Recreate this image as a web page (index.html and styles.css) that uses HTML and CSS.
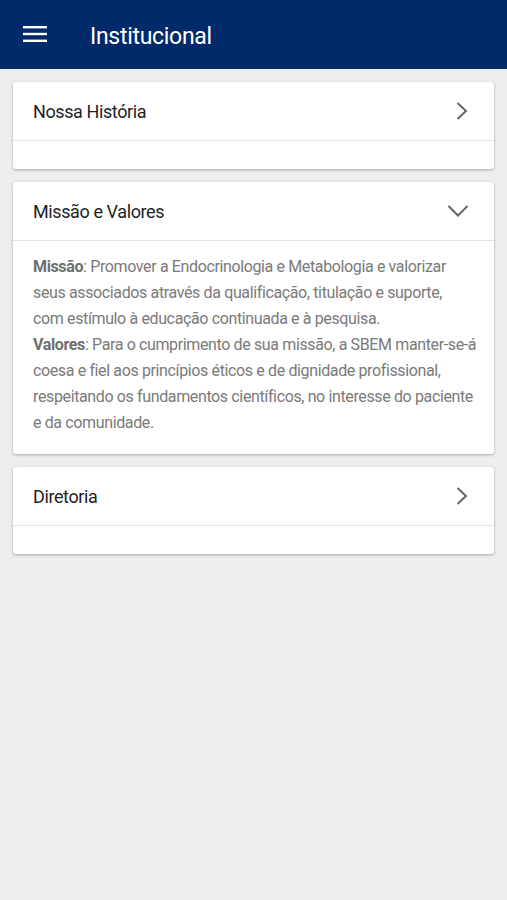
FILE: index.html
```html
<!DOCTYPE html>
<html lang="pt-BR">
  <head>
    <meta charset="UTF-8" />
    <meta name="viewport" content="width=device-width, initial-scale=1.0" />
    <title>Institucional</title>
    <link rel="stylesheet" href="styles.css">
  </head>
  <body>
    <header class="toolbar">
      <button class="menu-btn" aria-label="Menu">
        <svg width="24" height="18" viewBox="0 0 24 18">
          <rect x="0" y="1" width="24" height="2.4" fill="#fff" />
          <rect x="0" y="7.8" width="24" height="2.4" fill="#fff" />
          <rect x="0" y="14.6" width="24" height="2.4" fill="#fff" />
        </svg>
      </button>
      <h1>Institucional</h1>
    </header>

    <main class="content">
      <section class="card">
        <div class="card-head">
          <span>Nossa História</span>
          <svg class="chevron" width="14" height="20" viewBox="0 0 14 20">
            <path d="M2.5 2 L11 10 L2.5 18" fill="none" stroke="#666" stroke-width="2" />
          </svg>
        </div>
        <div class="card-empty"></div>
      </section>

      <section class="card">
        <div class="card-head">
          <span>Missão e Valores</span>
          <svg class="chevron" width="22" height="14" viewBox="0 0 22 14">
            <path d="M1.5 2 L11 11.5 L20.5 2" fill="none" stroke="#666" stroke-width="2" />
          </svg>
        </div>
        <div class="card-body">
          <p><strong>Missão</strong>: Promover a Endocrinologia e Metabologia e valorizar seus associados através da qualificação, titulação e suporte, <span class="nowrap">com estímulo</span> à educação continuada e à pesquisa.</p>
          <p><strong>Valores</strong>: Para o cumprimento de sua missão, a SBEM <span class="nowrap">manter-se-á</span> coesa e fiel aos princípios éticos e de dignidade profissional, respeitando os fundamentos científicos, no interesse do paciente e da comunidade.</p>
        </div>
      </section>

      <section class="card">
        <div class="card-head">
          <span>Diretoria</span>
          <svg class="chevron" width="14" height="20" viewBox="0 0 14 20">
            <path d="M2.5 2 L11 10 L2.5 18" fill="none" stroke="#666" stroke-width="2" />
          </svg>
        </div>
        <div class="card-empty"></div>
      </section>
    </main>
  </body>
</html>
```

FILE: styles.css
```css
body {
  font-family: Roboto, "Liberation Sans", sans-serif;
  background-color: #eceef0;
  margin: 0;
  padding: 0;
  min-height: 900px;
}

.toolbar {
  height: 69px;
  background-color: #012a6b;
  display: flex;
  align-items: center;
  padding: 0 0 0 23px;
  box-sizing: border-box;
}

.menu-btn {
  background: none;
  border: 0;
  padding: 0;
  width: 24px;
  height: 18px;
  display: flex;
  margin-top: -1px;
}

.toolbar h1 {
  margin: 3px 0 0 43px;
  color: #fff;
  font-size: 23px;
  font-weight: 400;
  letter-spacing: -0.3px;
}

.content {
  padding: 13px 13px;
  display: flex;
  flex-direction: column;
  gap: 13px;
}

.card {
  background-color: #fff;
  border-radius: 3px;
  box-shadow: 0 1px 3px rgba(0, 0, 0, 0.3);
}

.card-head {
  height: 58px;
  display: flex;
  align-items: center;
  justify-content: space-between;
  padding: 0 25px 0 20px;
  border-bottom: 1px solid #e3e3e3;
  font-size: 18px;
  letter-spacing: -0.4px;
  color: #1f1f1f;
}

.card-head .chevron {
  display: block;
}

.card-empty {
  height: 28px;
}

.card-body {
  padding: 13px 14px 18px 20px;
  color: #7a7a7a;
  font-size: 16px;
  line-height: 26px;
  letter-spacing: -0.37px;
}

.card-body p {
  margin: 0;
}

.card-body strong {
  color: #6e6e6e;
  font-weight: 700;
}

.nowrap {
  white-space: nowrap;
}
```
